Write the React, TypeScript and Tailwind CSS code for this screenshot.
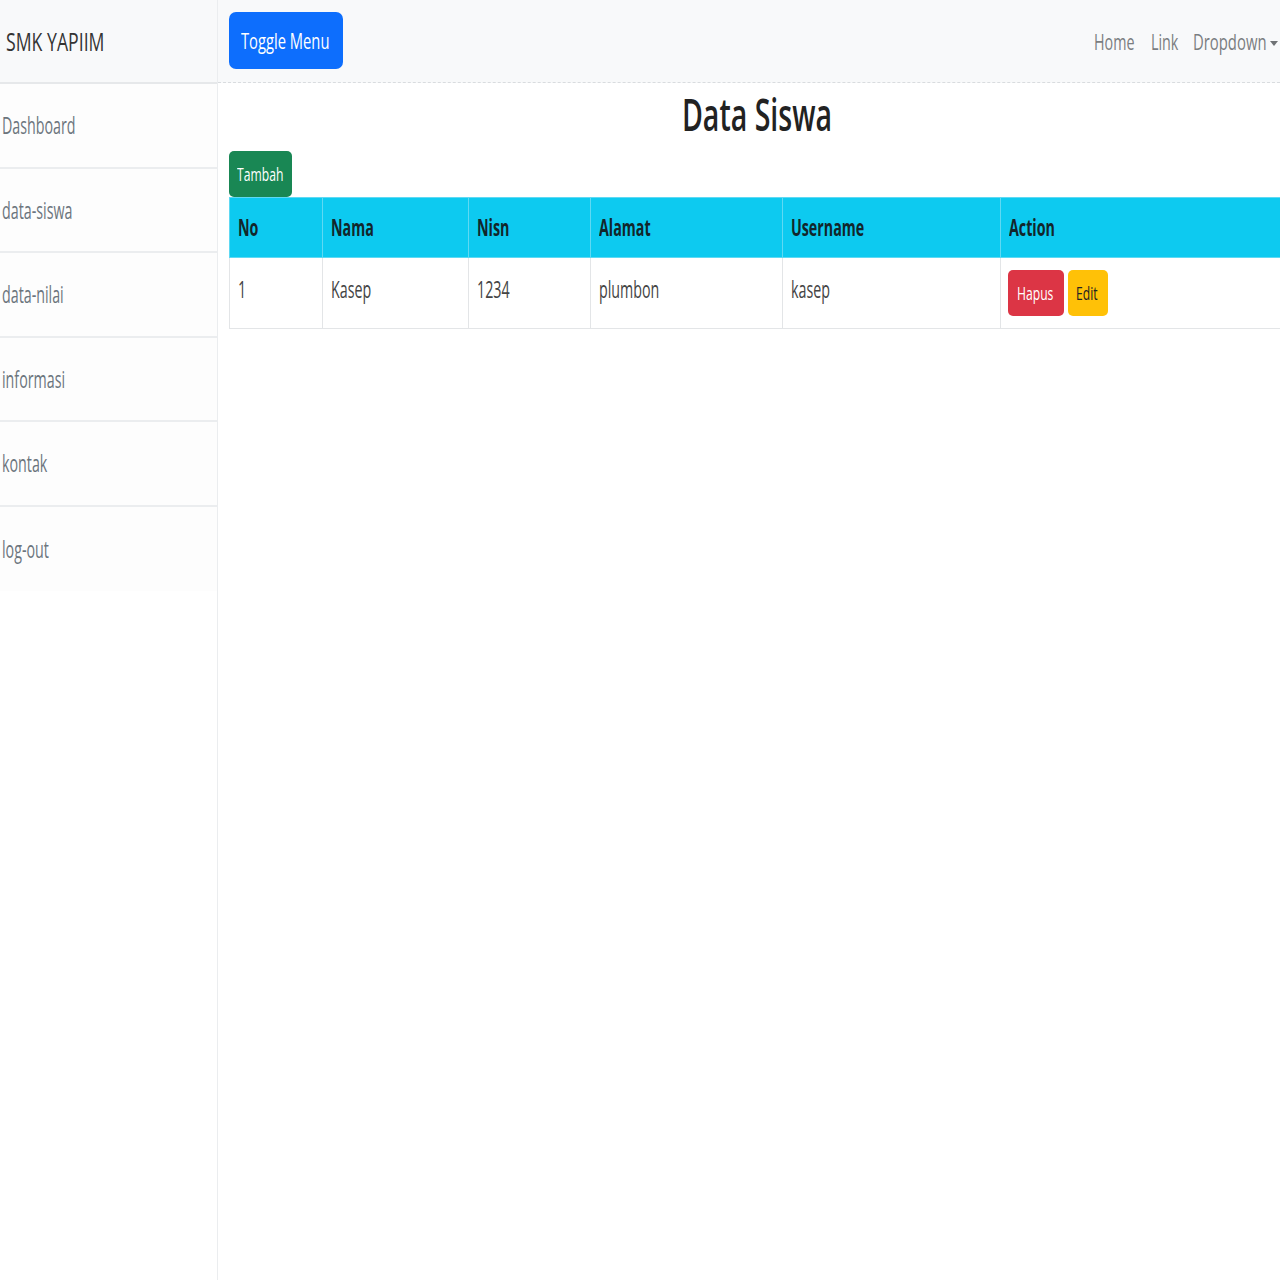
import React from "react";

const T = ({ children, className = "" }: { children: React.ReactNode; className?: string }) => (
  <span className={"inline-block whitespace-nowrap origin-left " + (className.includes("scale-x-") ? "" : "scale-x-[0.62] ") + className}>{children}</span>
);

const menu = ["Dashboard", "data-siswa", "data-nilai", "informasi", "kontak", "log-out"];

export default function App() {
  return (
    <div className="flex w-[1280px] min-h-[1280px] overflow-hidden bg-white font-['Open_Sans',sans-serif]">
      <aside className="w-[218px] shrink-0 border-r border-[#ebedef] bg-white flex flex-col">
        <div className="h-[84px] bg-[#f8f9fa] border-b-2 border-[#e6e8ea] flex items-center pl-[6px]">
          <T className="scale-x-[0.68] text-[26px] text-[#333]">SMK YAPIIM</T>
        </div>
        {menu.map((m) => (
          <div
            key={m}
            className="h-[84.5px] bg-[#fdfdfd] border-b-2 border-[#ebedef] last:border-b-0 flex items-center pl-[2px]"
          >
            <T className="text-[23px] text-[#6c757d]">{m}</T>
          </div>
        ))}
      </aside>
      <div className="flex-1 flex flex-col min-w-0">
        <nav className="h-[83px] shrink-0 bg-[#f8f9fa] border-b border-dashed border-[#d9dcdf] flex items-center pl-[11px]">
          <button className="h-[57px] w-[114px] rounded-[7px] bg-[#0d6efd] flex items-center pl-[12px] -mt-[1px]">
            <T className="scale-x-[0.67] text-[22px] text-white">Toggle Menu</T>
          </button>
          <div className="ml-auto flex items-center h-full">
            <div className="w-[57px]">
              <T className="scale-x-[0.65] text-[22px] text-[#7a7d80]">Home</T>
            </div>
            <div className="w-[42px]">
              <T className="scale-x-[0.65] text-[22px] text-[#7a7d80]">Link</T>
            </div>
            <div className="w-[87px] relative flex items-center">
              <T className="scale-x-[0.675] text-[22px] text-[#7a7d80]">Dropdown</T>
              <svg width="8" height="5" viewBox="0 0 8 5" className="absolute left-[77px] top-[16px]">
                <path d="M0 0 L8 0 L4 5 Z" fill="#6f7275" />
              </svg>
            </div>
          </div>
        </nav>
        <main className="pl-[11px]">
          <div className="w-[1056px] h-[68px] flex justify-center items-start">
            <span className="inline-block whitespace-nowrap origin-center scale-x-[0.62] text-[46px] font-semibold text-[#222] leading-[60px]">
              Data Siswa
            </span>
          </div>
          <button className="h-[46px] w-[63px] rounded-[5px] bg-[#198754] flex items-center pl-[8px]">
            <T className="scale-x-[0.64] text-[19px] text-white">Tambah</T>
          </button>
          <table className="w-[1070px] border-collapse table-fixed">
            <colgroup>
              <col className="w-[93px]" />
              <col className="w-[146px]" />
              <col className="w-[122px]" />
              <col className="w-[192px]" />
              <col className="w-[218px]" />
              <col />
            </colgroup>
            <thead>
              <tr className="h-[60px] bg-[#0dcaf0]">
                {["No", "Nama", "Nisn", "Alamat", "Username", "Action"].map((h) => (
                  <th
                    key={h}
                    className="border border-[#5fd9f3] text-left align-middle pl-[8px] font-bold"
                  >
                    <T className="text-[23px] text-[#12262b]">{h}</T>
                  </th>
                ))}
              </tr>
            </thead>
            <tbody>
              <tr className="h-[71px]">
                {["1", "Kasep", "1234", "plumbon", "kasep"].map((c, i) => (
                  <td key={i} className="border border-[#e3e5e7] align-top pl-[8px] pt-[15px]">
                    <T className="text-[23px] text-[#444] leading-[32px]">{c}</T>
                  </td>
                ))}
                <td className="border border-[#e3e5e7] align-top pl-[7px] pt-[12px]">
                  <div className="flex gap-[4px]">
                    <button className="h-[46px] w-[56px] rounded-[5px] bg-[#dc3545] flex items-center pl-[9px]">
                      <T className="scale-x-[0.64] text-[19px] text-white">Hapus</T>
                    </button>
                    <button className="h-[46px] w-[40px] rounded-[5px] bg-[#ffc107] flex items-center pl-[8px]">
                      <T className="scale-x-[0.64] text-[19px] text-[#222]">Edit</T>
                    </button>
                  </div>
                </td>
              </tr>
            </tbody>
          </table>
        </main>
      </div>
    </div>
  );
}
